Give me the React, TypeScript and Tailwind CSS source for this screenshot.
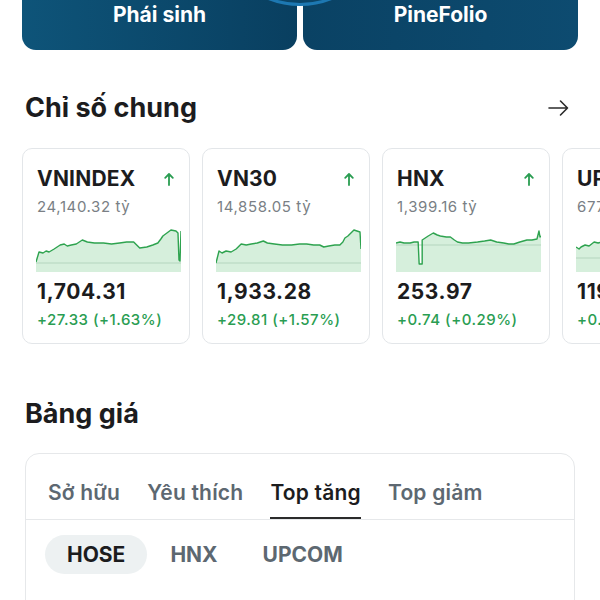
import type { ReactNode } from 'react';

type IndexCard = {
  name: string;
  volume: string;
  value: string;
  change: string;
  line: string;
  refY: number;
};

const cards: IndexCard[] = [
  {
    name: 'VNINDEX',
    volume: '24,140.32 tỷ',
    value: '1,704.31',
    change: '+27.33 (+1.63%)',
    line: '0,34 3,24 7,25 10,23 13,24 18,21 24,17 28,16 31,18 35,17 40,16 46,12 51,14 58,15 67,15 75,16 83,15 90,14 97,14 100,17 103,20 110,19 116,17 121,15 124,11 126,8 130,5 134,2 139,3 141,5 142,32 143,33 144,3',
    refY: 35,
  },
  {
    name: 'VN30',
    volume: '14,858.05 tỷ',
    value: '1,933.28',
    change: '+29.81 (+1.57%)',
    line: '0,35 3,23 6,25 10,23 15,24 20,21 25,16 30,17 35,16 41,15 47,13 51,15 58,16 66,17 75,17 83,16 90,16 97,17 103,17 107,19 112,18 118,17 123,17 126,14 128,10 131,8 134,5 137,2 140,3 143,4 144,21',
    refY: 35,
  },
  {
    name: 'HNX',
    volume: '1,399.16 tỷ',
    value: '253.97',
    change: '+0.74 (+0.29%)',
    line: '0,15 4,14 8,15 14,15 18,14 22,14 23,36 26,36 26,12 29,10 32,8 37,5 41,7 44,8 50,9 54,9 58,12 61,14 66,15 72,15 81,14 88,13 94,12 100,14 107,15 112,16 117,16 123,14 130,12 135,12 140,11 142,3 143,9 144,8',
    refY: 17,
  },
  {
    name: 'UPCOM',
    volume: '677.40 tỷ',
    value: '119.52',
    change: '+0.87 (+0.73%)',
    line: '0,19 3,21 5,19 9,17 13,18 18,14 22,15 28,13 35,14 44,12 52,14 60,13 70,15 80,14 90,13 100,14 110,12 120,13 130,11 138,9 144,10',
    refY: 30,
  },
];

function Sparkline({ line, refY }: { line: string; refY: number }) {
  const fill = `M${line.split(' ').join(' L')} L144,44 L0,44 Z`;
  return (
    <svg width="145" height="44" viewBox="0 0 144 44" preserveAspectRatio="none" className="mt-[11px] -ml-[1px] block">
      <path d={fill} fill="#d6efdc" />
      <line x1="0" y1={refY} x2="144" y2={refY} stroke="#b4d6bd" strokeWidth="1" />
      <polyline points={line} fill="none" stroke="#2ea34f" strokeWidth="1.4" strokeLinejoin="round" />
    </svg>
  );
}

function UpArrow() {
  return (
    <svg width="10" height="14" viewBox="0 0 10 14" className="mr-[1px]">
      <path d="M5 13V2M1.2 5.8L5 2l3.8 3.8" fill="none" stroke="#2a9d52" strokeWidth="1.8" strokeLinecap="round" strokeLinejoin="round" />
    </svg>
  );
}

function Card({ card }: { card: IndexCard }) {
  return (
    <div className="w-[168px] shrink-0 rounded-[10px] border border-[#e3e6e9] bg-white px-[14px] pt-[17px] pb-[13px]">
      <div className="flex h-[26px] items-center justify-between">
        <span className="text-[21px] leading-[26px] font-bold tracking-[0.2px] text-[#1c1c1e]">{card.name}</span>
        <UpArrow />
      </div>
      <div className="mt-[5px] whitespace-nowrap text-[15px] leading-[20px] tracking-[0.6px] text-[#7a7f85]">{card.volume}</div>
      <Sparkline line={card.line} refY={card.refY} />
      <div className="mt-[7px] text-[21px] leading-[26px] font-bold tracking-[0.6px] text-[#1c1c1e]">{card.value}</div>
      <div className="mt-[5px] whitespace-nowrap text-[15px] leading-[20px] font-medium tracking-[0.5px] text-[#2a9d52]">{card.change}</div>
    </div>
  );
}

function Heading({ children }: { children: ReactNode }) {
  return <h2 className="text-[27px] leading-[32px] font-bold text-[#1c1c1e]">{children}</h2>;
}

export default function App() {
  const tabs = ['Sở hữu', 'Yêu thích', 'Top tăng', 'Top giảm'];
  const exchanges = ['HOSE', 'HNX', 'UPCOM'];

  return (
    <div className="h-[600px] w-[600px] overflow-hidden bg-white font-['Inter',sans-serif]">
      {/* shortcut buttons, cut off at the top */}
      <div className="relative -mt-[20px] flex gap-[6px] px-[22px]">
        <div className="flex h-[70px] flex-1 items-center justify-center rounded-[14px] bg-gradient-to-r from-[#0e5479] to-[#093f60] text-[21px] font-bold text-white">
          Phái sinh
        </div>
        <div className="flex h-[70px] flex-1 items-center justify-center rounded-[14px] bg-gradient-to-r from-[#0a4264] to-[#0d4b70] text-[21px] font-bold text-white">
          PineFolio
        </div>
        <div className="absolute left-[212px] top-[-150px] h-[176px] w-[176px] rounded-full border-[3px] border-[#1d78b2] bg-[#0b4568]" />
      </div>

      <div className="mt-[42px] flex items-center justify-between pl-[25px] pr-[31px]">
        <Heading>Chỉ số chung</Heading>
        <svg width="21" height="18" viewBox="0 0 21 18">
          <path d="M1 9h18.5M12.5 2l7 7-7 7" fill="none" stroke="#2b2b2b" strokeWidth="1.6" strokeLinecap="round" strokeLinejoin="round" />
        </svg>
      </div>

      <div className="mt-[24px] flex gap-[12px] overflow-hidden pl-[22px]">
        {cards.map((c) => (
          <Card key={c.name} card={c} />
        ))}
      </div>

      <div className="mt-[54px] px-[25px]">
        <Heading>Bảng giá</Heading>
      </div>

      <div className="mx-[25px] mt-[23px] rounded-[14px] border border-[#e6e8ea] bg-white">
        <div className="flex gap-[27px] border-b border-[#e6e8ea] px-[22px] pt-[27px]">
          {tabs.map((t) => (
            <div
              key={t}
              className={
                t === 'Top tăng'
                  ? 'border-b-2 border-[#2b2b2b] pb-[12px] text-[21px] leading-[24px] font-semibold tracking-[0.2px] text-[#1c1c1e]'
                  : 'border-b-2 border-transparent pb-[12px] text-[21px] leading-[24px] font-semibold tracking-[0.2px] text-[#5d6871]'
              }
            >
              {t}
            </div>
          ))}
        </div>
        <div className="flex gap-[1px] px-[19px] pt-[15px] pb-[40px]">
          {exchanges.map((e) => (
            <div
              key={e}
              className={
                e === 'HOSE'
                  ? 'flex h-[39px] items-center rounded-full bg-[#edf1f2] px-[22px] text-[21px] font-bold text-[#1c1c1e]'
                  : 'flex h-[39px] items-center rounded-full px-[22px] text-[21px] font-bold text-[#5d6871]'
              }
            >
              {e}
            </div>
          ))}
        </div>
      </div>
    </div>
  );
}
